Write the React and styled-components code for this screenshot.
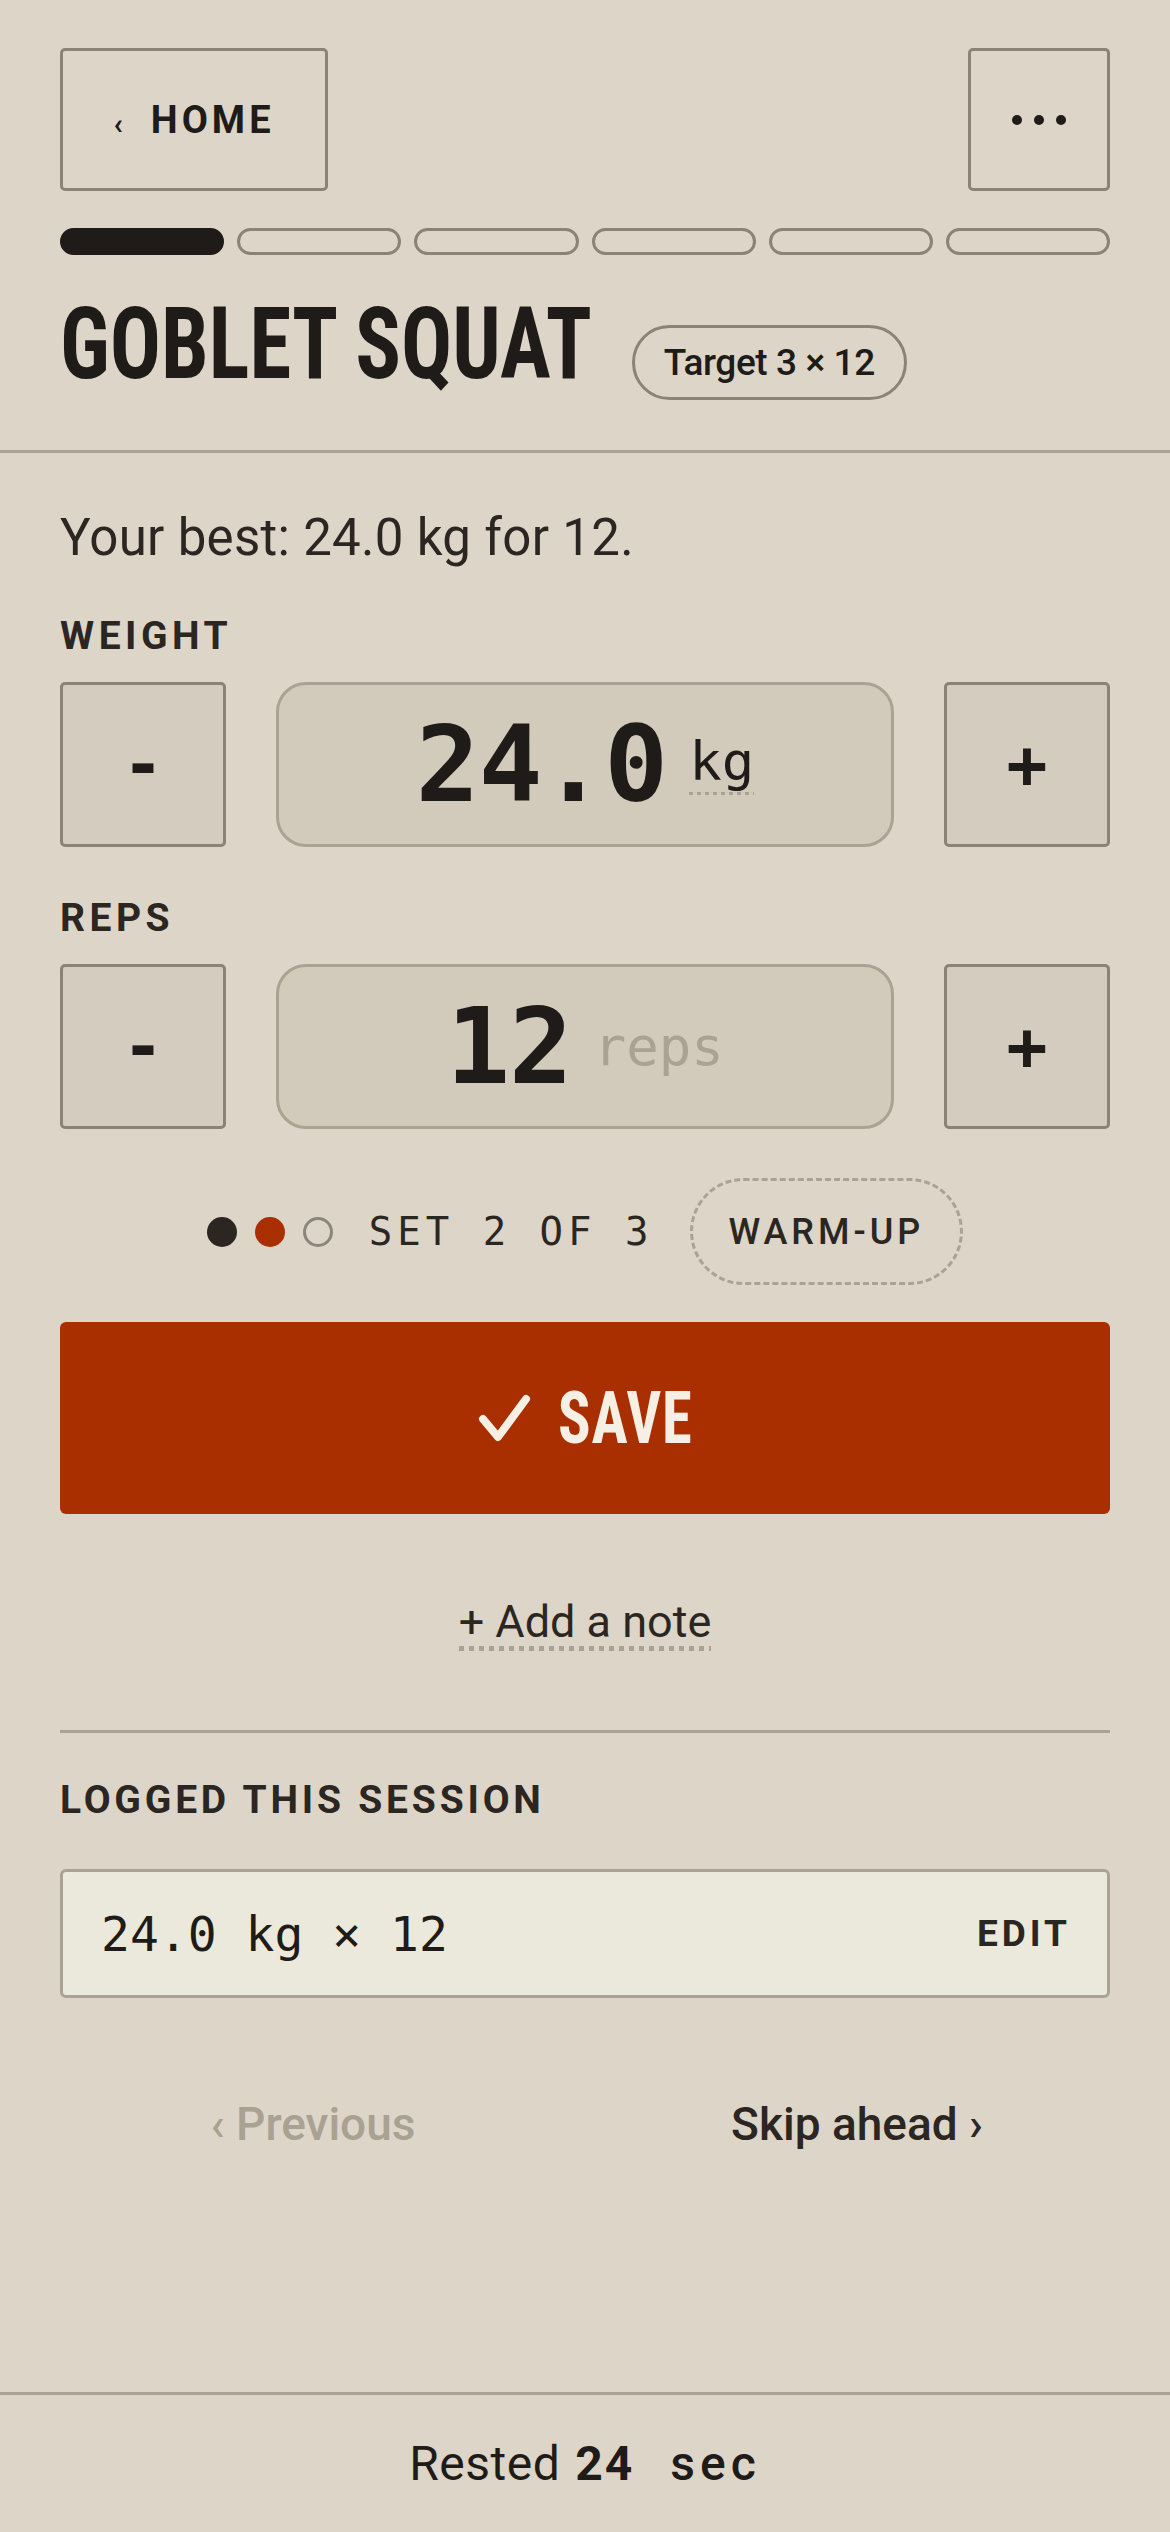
import React from "react";
import styled, { createGlobalStyle } from "styled-components";

const INK = "#1e1b18";
const TEXT = "#2b2622";
const DARK_LINE = "#8a8376";
const LIGHT_LINE = "#aaa293";
const MUTED = "#a9a192";
const RED = "#a92e00";

const SANS = `Roboto, "Liberation Sans", Arial, sans-serif`;
const COND = `"Liberation Sans Narrow", "Roboto Condensed", "DejaVu Sans Condensed", sans-serif`;
const MONO = `"DejaVu Sans Mono", "Liberation Mono", monospace`;

const Global = createGlobalStyle`
  html, body { margin: 0; padding: 0; background: #dcd5c8; }
  body { font-family: ${SANS}; color: ${TEXT}; }
  *, *::before, *::after { box-sizing: border-box; }
  button { font: inherit; color: inherit; }
`;

const Page = styled.div`
  min-height: 100vh;
  display: flex;
  flex-direction: column;
`;

const Header = styled.header`
  padding: 48px 60px 50px;
  border-bottom: 3px solid ${LIGHT_LINE};
`;

const TopBar = styled.div`
  display: flex;
  justify-content: space-between;
  align-items: center;
`;

const FrameButton = styled.button`
  width: ${(p) => p.$w}px;
  height: 143px;
  padding: 0;
  border: 3px solid ${DARK_LINE};
  border-radius: 5px;
  background: transparent;
  display: flex;
  align-items: center;
  justify-content: center;
  cursor: pointer;
`;

const Chevron = styled.span`
  font-family: ${SANS};
  font-size: 30px;
  font-weight: 700;
  line-height: 1;
  padding-top: 8px;
  margin-right: 28px;
  color: ${INK};
`;

const HomeLabel = styled.span`
  font-family: ${SANS};
  font-size: 38px;
  font-weight: 700;
  letter-spacing: 4px;
  line-height: 1;
  color: ${INK};
`;

const Dots = styled.span`
  display: flex;
  gap: 12px;
`;

const Dot = styled.span`
  width: 10px;
  height: 10px;
  border-radius: 50%;
  background: ${INK};
`;

const Progress = styled.div`
  margin-top: 37px;
  display: grid;
  grid-template-columns: repeat(6, 1fr);
  gap: 13px;
`;

const Segment = styled.div`
  height: 27px;
  border-radius: 14px;
  border: 3px solid ${(p) => (p.$done ? INK : DARK_LINE)};
  background: ${(p) => (p.$done ? INK : "transparent")};
`;

const TitleRow = styled.div`
  margin-top: 39px;
  display: flex;
  align-items: flex-start;
  gap: 41px;
`;

/* the heading face is narrower than any installed condensed font,
   so the glyphs are squeezed horizontally and the freed space returned */
const Title = styled.h1`
  margin: 0 -95px 0 0;
  font-family: ${COND};
  font-size: 100px;
  font-weight: 700;
  line-height: 1;
  color: ${INK};
  white-space: nowrap;
  transform: scaleX(0.85);
  transform-origin: left center;
`;

const TargetPill = styled.span`
  margin-top: 31px;
  height: 75px;
  padding: 0 29px;
  border: 3px solid ${DARK_LINE};
  border-radius: 40px;
  display: flex;
  align-items: center;
  font-size: 37px;
  font-weight: 500;
  letter-spacing: -0.4px;
  color: ${INK};
  white-space: nowrap;
`;

const Main = styled.main`
  flex: 1;
  padding: 0 60px;
`;

const Best = styled.p`
  margin: 54px 0 0;
  font-size: 51px;
  line-height: 61px;
  font-weight: 400;
  letter-spacing: 0.3px;
`;

const Field = styled.section`
  margin-top: 45px;
  & + & {
    margin-top: 48px;
  }
`;

const Label = styled.div`
  font-size: 39px;
  font-weight: 700;
  letter-spacing: ${(p) => p.$ls ?? 4.5}px;
  line-height: 47px;
  color: ${TEXT};
  margin-bottom: ${(p) => p.$mb ?? 22}px;
`;

const Stepper = styled.div`
  display: grid;
  grid-template-columns: 166px 1fr 166px;
  gap: 50px;
  height: 165px;
`;

const StepButton = styled.button`
  border: 3px solid ${DARK_LINE};
  border-radius: 5px;
  background: #d4cdbf;
  font-family: ${MONO};
  font-size: 68px;
  font-weight: 700;
  color: ${INK};
  display: flex;
  align-items: center;
  justify-content: center;
  padding: 0;
  cursor: pointer;
`;

const ValueBox = styled.div`
  border: 3px solid ${LIGHT_LINE};
  border-radius: 30px;
  background: #d2cbbb;
  display: flex;
  align-items: center;
  justify-content: center;
  white-space: nowrap;
`;

const BigNum = styled.span`
  font-family: ${MONO};
  font-size: 106px;
  font-weight: 700;
  line-height: 1;
  letter-spacing: -1px;
  color: ${INK};
`;

const Unit = styled.span`
  margin-left: 22px;
  font-family: ${MONO};
  font-size: 54px;
  font-weight: 500;
  line-height: 1;
  color: ${(p) => (p.$muted ? LIGHT_LINE : INK)};
  ${(p) =>
    p.$dotted &&
    `padding-bottom: 6px;
     background: linear-gradient(to right, ${LIGHT_LINE} 55%, transparent 0) left bottom / 8px 3px repeat-x;`}
`;

const SetRow = styled.div`
  margin-top: 49px;
  height: 107px;
  display: flex;
  align-items: center;
  justify-content: center;
  gap: 36px;
`;

const SetDots = styled.div`
  display: flex;
  gap: 18px;
`;

const SetDot = styled.span`
  width: 30px;
  height: 30px;
  border-radius: 50%;
  background: ${(p) =>
    p.$state === "done" ? TEXT : p.$state === "current" ? RED : "transparent"};
  border: ${(p) => (p.$state === "todo" ? `3px solid #8c8579` : "none")};
`;

const SetText = styled.span`
  font-family: ${MONO};
  font-size: 39px;
  font-weight: 500;
  letter-spacing: 5px;
  white-space: pre;
  color: ${TEXT};
`;

const WarmPill = styled.button`
  height: 107px;
  padding: 0 36px;
  border: 3px dashed ${LIGHT_LINE};
  border-radius: 54px;
  background: transparent;
  font-family: ${SANS};
  font-size: 36px;
  font-weight: 500;
  letter-spacing: 4px;
  color: ${TEXT};
  cursor: pointer;
`;

const SaveButton = styled.button`
  margin-top: 37px;
  width: 100%;
  height: 192px;
  border: none;
  border-radius: 6px;
  background: ${RED};
  color: #f5efe4;
  display: flex;
  align-items: center;
  justify-content: center;
  gap: 26px;
  cursor: pointer;
`;

const SaveLabel = styled.span`
  font-family: ${COND};
  font-size: 73px;
  font-weight: 700;
  letter-spacing: 1px;
  line-height: 1;
  transform: scaleX(0.83);
  transform-origin: left center;
  margin-right: -27px;
`;

const NoteRow = styled.div`
  margin-top: 85px;
  display: flex;
  justify-content: center;
`;

const NoteLink = styled.span`
  display: inline-block;
  font-size: 45px;
  line-height: 1;
  padding-bottom: 7px;
  color: ${TEXT};
  background: linear-gradient(to right, ${LIGHT_LINE} 55%, transparent 0) left bottom / 10px 5px repeat-x;
`;

const Session = styled.section`
  margin-top: 79px;
  border-top: 3px solid ${LIGHT_LINE};
  padding-top: 44px;
`;

const Card = styled.div`
  margin-top: 45px;
  height: 129px;
  border: 3px solid ${LIGHT_LINE};
  border-radius: 6px;
  background: #ebe8dc;
  display: flex;
  align-items: center;
  justify-content: space-between;
  padding: 0 36px 0 38px;
`;

const CardText = styled.span`
  font-family: ${MONO};
  font-size: 48px;
  font-weight: 500;
  white-space: pre;
  color: ${INK};
`;

const EditButton = styled.button`
  border: none;
  background: transparent;
  padding: 0;
  font-family: ${SANS};
  font-size: 37px;
  font-weight: 700;
  letter-spacing: 4px;
  color: ${TEXT};
  cursor: pointer;
`;

const NavRow = styled.nav`
  margin-top: 99px;
  display: grid;
  grid-template-columns: 1fr 1fr;
  gap: 38px;
`;

const NavLink = styled.span`
  text-align: center;
  font-size: 46px;
  font-weight: 500;
  line-height: 54px;
  color: ${(p) => (p.$muted ? MUTED : TEXT)};
`;

const Footer = styled.footer`
  height: 140px;
  border-top: 3px solid ${LIGHT_LINE};
  display: flex;
  align-items: center;
  justify-content: center;
  font-size: 48px;
  color: ${INK};
  white-space: nowrap;
`;

const RestLabel = styled.span`
  letter-spacing: 0.5px;
`;

const RestValue = styled.span`
  margin-left: 15px;
  font-weight: 700;
  letter-spacing: 2px;
`;

const RestUnit = styled.span`
  margin-left: 36px;
  font-weight: 500;
  letter-spacing: 5px;
`;

function Check() {
  return (
    <svg width="56" height="52" viewBox="0 0 56 52" aria-hidden="true">
      <path
        d="M7 27 L22 45 L50 7"
        fill="none"
        stroke="#f5efe4"
        strokeWidth="8"
        strokeLinecap="round"
        strokeLinejoin="round"
      />
    </svg>
  );
}

export default function App() {
  const segments = [true, false, false, false, false, false];
  return (
    <Page>
      <Global />
      <Header>
        <TopBar>
          <FrameButton $w={268}>
            <Chevron>‹</Chevron>
            <HomeLabel>HOME</HomeLabel>
          </FrameButton>
          <FrameButton $w={142} aria-label="More">
            <Dots>
              <Dot />
              <Dot />
              <Dot />
            </Dots>
          </FrameButton>
        </TopBar>
        <Progress>
          {segments.map((d, i) => (
            <Segment key={i} $done={d} />
          ))}
        </Progress>
        <TitleRow>
          <Title>GOBLET SQUAT</Title>
          <TargetPill>Target 3 × 12</TargetPill>
        </TitleRow>
      </Header>

      <Main>
        <Best>Your best: 24.0 kg for 12.</Best>

        <Field>
          <Label>WEIGHT</Label>
          <Stepper>
            <StepButton>-</StepButton>
            <ValueBox>
              <BigNum>24.0</BigNum>
              <Unit $dotted>kg</Unit>
            </ValueBox>
            <StepButton>+</StepButton>
          </Stepper>
        </Field>

        <Field>
          <Label>REPS</Label>
          <Stepper>
            <StepButton>-</StepButton>
            <ValueBox>
              <BigNum>12</BigNum>
              <Unit $muted>reps</Unit>
            </ValueBox>
            <StepButton>+</StepButton>
          </Stepper>
        </Field>

        <SetRow>
          <SetDots>
            <SetDot $state="done" />
            <SetDot $state="current" />
            <SetDot $state="todo" />
          </SetDots>
          <SetText>SET 2 OF 3</SetText>
          <WarmPill>WARM-UP</WarmPill>
        </SetRow>

        <SaveButton>
          <Check />
          <SaveLabel>SAVE</SaveLabel>
        </SaveButton>

        <NoteRow>
          <NoteLink>+ Add a note</NoteLink>
        </NoteRow>

        <Session>
          <Label $mb={0} $ls={3.8}>LOGGED THIS SESSION</Label>
          <Card>
            <CardText>24.0 kg × 12</CardText>
            <EditButton>EDIT</EditButton>
          </Card>
        </Session>

        <NavRow>
          <NavLink $muted>‹ Previous</NavLink>
          <NavLink>Skip ahead ›</NavLink>
        </NavRow>
      </Main>

      <Footer>
        <RestLabel>Rested</RestLabel>
        <RestValue>24</RestValue>
        <RestUnit>sec</RestUnit>
      </Footer>
    </Page>
  );
}
